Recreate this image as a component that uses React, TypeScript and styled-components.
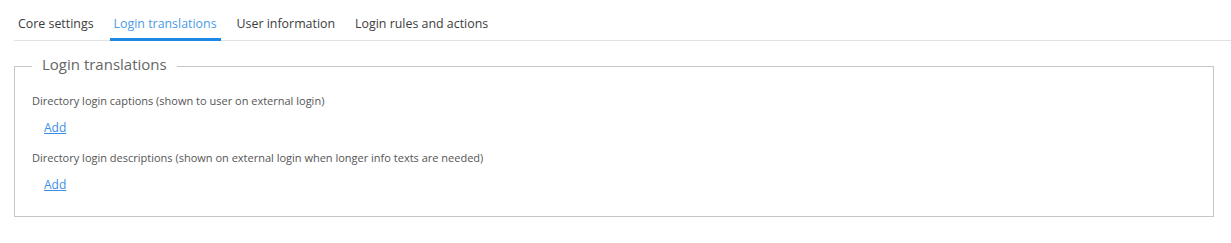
import React from "react";
import styled, { createGlobalStyle } from "styled-components";

const Global = createGlobalStyle`
  html, body { margin: 0; padding: 0; background: #fff; }
  body { font-family: "Open Sans", "Noto Sans", sans-serif; }
`;

const Page = styled.div`
  padding: 10px 0 0 14px;
`;

const TabBar = styled.div`
  display: flex;
  gap: 12px;
  border-bottom: 1px solid #e2e2e2;
`;

const Tab = styled.div<{ $active?: boolean }>`
  font-size: 12.4px;
  line-height: 28px;
  padding: 0 4px;
  color: ${(p) => (p.$active ? "#4b9be6" : "#3c3c3c")};
  border-bottom: 3px solid ${(p) => (p.$active ? "#1e88e5" : "transparent")};
  margin-bottom: -1px;
  cursor: pointer;
`;

const Box = styled.fieldset`
  margin: 16px 17px 0 0;
  border: 1px solid #c6c6c6;
  padding: 8px 17px 23px 17px;
`;

const Legend = styled.legend`
  font-size: 15px;
  line-height: 14px;
  color: #666;
  padding: 0 10px 4px;
  margin: 0;
`;

const Label = styled.div`
  font-size: 11px;
  color: #555;
  line-height: 16px;
  margin-top: 10px;
`;

const AddLink = styled.a`
  display: inline-block;
  margin: 11px 0 0 12px;
  font-size: 12px;
  color: #3a8ee6;
  text-decoration: underline;
  line-height: 16px;
`;

const Section = styled.div`
  display: flex;
  flex-direction: column;
  align-items: flex-start;
  & + & { margin-top: 4px; }
`;

export default function App() {
  const tabs = ["Core settings", "Login translations", "User information", "Login rules and actions"];
  return (
    <>
      <Global />
      <Page>
        <TabBar>
          {tabs.map((t) => (
            <Tab key={t} $active={t === "Login translations"}>{t}</Tab>
          ))}
        </TabBar>
        <Box>
          <Legend>Login translations</Legend>
          <Section>
            <Label>Directory login captions (shown to user on external login)</Label>
            <AddLink href="#">Add</AddLink>
          </Section>
          <Section>
            <Label>Directory login descriptions (shown on external login when longer info texts are needed)</Label>
            <AddLink href="#">Add</AddLink>
          </Section>
        </Box>
      </Page>
    </>
  );
}
